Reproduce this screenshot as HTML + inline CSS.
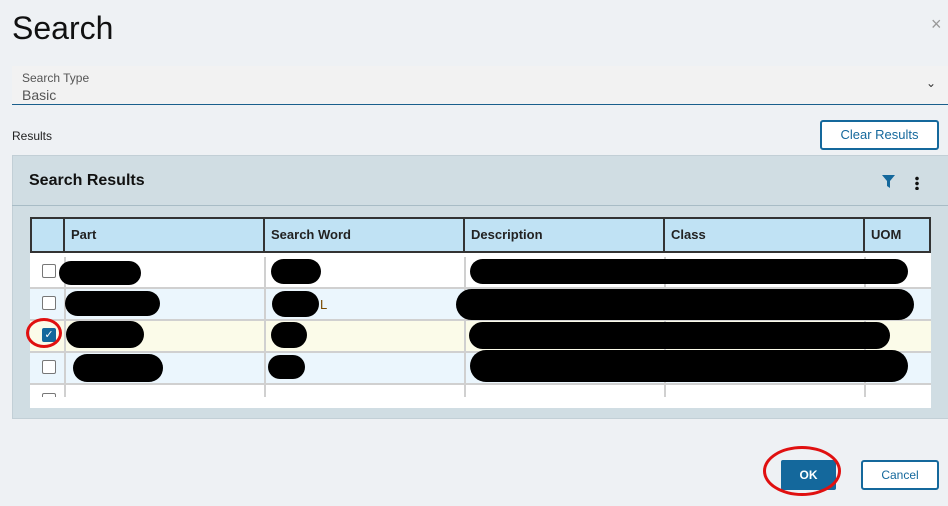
<!DOCTYPE html>
<html><head><meta charset="utf-8"><style>
*{box-sizing:border-box;margin:0;padding:0}
body{width:948px;height:506px;background:#eef1f4;font-family:"Liberation Sans",sans-serif;position:relative;overflow:hidden;color:#000}
.a{position:absolute}
.blob{position:absolute;background:#000;border-radius:14px}
.hc{position:absolute;top:0;height:35px;border-right:2px solid #333;font-size:13px;font-weight:bold;line-height:35px;padding-left:6px;color:#222}
.cb{position:absolute;left:12px;width:14px;height:14px;border:1px solid #777;border-radius:2px;background:#fff}
.row{position:absolute;left:0;width:901px;height:32px;border-bottom:2px solid #d0d0d0}
.vl{position:absolute;top:40px;width:2px;height:150px;background:#d0d0d0}
</style></head><body>
<div class="a" style="left:12px;top:10px;font-size:32px;color:#111">Search</div>
<div class="a" style="left:931px;top:14px;font-size:18px;color:#999">×</div>
<div class="a" style="left:12px;top:66px;width:936px;height:39px;background:#f2f2f2;border-bottom:1px solid #1a5f8c"></div>
<div class="a" style="left:22px;top:71px;font-size:12px;color:#555">Search Type</div>
<div class="a" style="left:22px;top:87px;font-size:14px;color:#555">Basic</div>
<div class="a" style="left:926px;top:76px;font-size:12px;color:#333">⌄</div>
<div class="a" style="left:12px;top:129px;font-size:12px;color:#222">Results</div>
<div class="a" style="left:820px;top:120px;width:119px;height:30px;border:2px solid #14689c;border-radius:3px;background:#fff;color:#14689c;font-size:13px;text-align:center;line-height:26px">Clear Results</div>
<div class="a" style="left:12px;top:155px;width:940px;height:264px;background:#d0dde3;border:1px solid #c2cfd6"></div>
<div class="a" style="left:12px;top:205px;width:940px;height:1px;background:#a8bcc6"></div>
<div class="a" style="left:29px;top:172px;font-size:16px;font-weight:bold;color:#111">Search Results</div>
<svg class="a" style="left:882px;top:175px" width="13" height="13" viewBox="0 0 13 13"><path d="M0 0H13L8 6V13L5 11V6Z" fill="#14689c"/></svg>
<div class="a" style="left:915px;top:176px;width:4px;height:14px;background:radial-gradient(circle,#111 1.6px,transparent 2px) 0 0/4px 5px repeat-y"></div>
<div class="a" style="left:30px;top:217px;width:901px;height:191px;background:#fff;overflow:hidden">
 <div class="a" style="left:0;top:0;width:901px;height:36px;background:#c0e2f4;border:2px solid #333"></div>
 <div class="hc" style="left:0;width:35px"></div>
 <div class="hc" style="left:35px;width:200px">Part</div>
 <div class="hc" style="left:235px;width:200px">Search Word</div>
 <div class="hc" style="left:435px;width:200px">Description</div>
 <div class="hc" style="left:635px;width:200px">Class</div>
 <div class="hc" style="left:835px;width:66px;border-right:0">UOM</div>
 <div class="row" style="top:40px;background:#fff"><div class="cb" style="top:7px"></div></div>
 <div class="row" style="top:72px;background:#ebf6fd"><div class="cb" style="top:7px"></div></div>
 <div class="row" style="top:104px;background:#fbfbe9"><div class="cb" style="top:7px;background:#14689c;border-color:#14689c;color:#fff;font-size:11px;line-height:12px;text-align:center">✓</div></div>
 <div class="row" style="top:136px;background:#ebf6fd"><div class="cb" style="top:7px"></div></div>
 <div class="row" style="top:168px;background:#fff;border:0"><div class="cb" style="top:8px"></div></div>
 <div class="vl" style="left:34px"></div><div class="vl" style="left:234px"></div><div class="vl" style="left:434px"></div><div class="vl" style="left:634px"></div><div class="vl" style="left:834px"></div>
 <div class="a" style="left:0;top:180px;width:901px;height:11px;background:#fff"></div>
</div>
<div class="a" style="left:931px;top:217px;width:17px;height:191px;background:#d0dde3"></div>
<div class="a" style="left:320px;top:297px;font-size:13px;color:#7a4a00">L</div>
<div class="blob" style="left:59px;top:261px;width:82px;height:24px"></div>
<div class="blob" style="left:271px;top:259px;width:50px;height:25px"></div>
<div class="blob" style="left:470px;top:259px;width:438px;height:25px"></div>
<div class="blob" style="left:65px;top:291px;width:95px;height:25px"></div>
<div class="blob" style="left:272px;top:291px;width:47px;height:26px"></div>
<div class="blob" style="left:456px;top:289px;width:458px;height:31px;border-radius:16px"></div>
<div class="blob" style="left:66px;top:321px;width:78px;height:27px"></div>
<div class="blob" style="left:271px;top:322px;width:36px;height:26px"></div>
<div class="blob" style="left:469px;top:322px;width:421px;height:27px"></div>
<div class="blob" style="left:73px;top:354px;width:90px;height:28px"></div>
<div class="blob" style="left:268px;top:355px;width:37px;height:24px"></div>
<div class="blob" style="left:470px;top:350px;width:438px;height:32px;border-radius:16px"></div>
<div class="a" style="left:26px;top:318px;width:36px;height:30px;border:3px solid #e01010;border-radius:50%"></div>
<div class="a" style="left:781px;top:460px;width:55px;height:30px;background:#14689c;border-radius:2px;color:#fff;font-size:12px;font-weight:bold;text-align:center;line-height:30px">OK</div>
<div class="a" style="left:763px;top:446px;width:78px;height:50px;border:3px solid #e01010;border-radius:50%"></div>
<div class="a" style="left:861px;top:460px;width:78px;height:30px;border:2px solid #14689c;border-radius:3px;background:#fff;color:#14689c;font-size:12px;text-align:center;line-height:26px">Cancel</div>
</body></html>
